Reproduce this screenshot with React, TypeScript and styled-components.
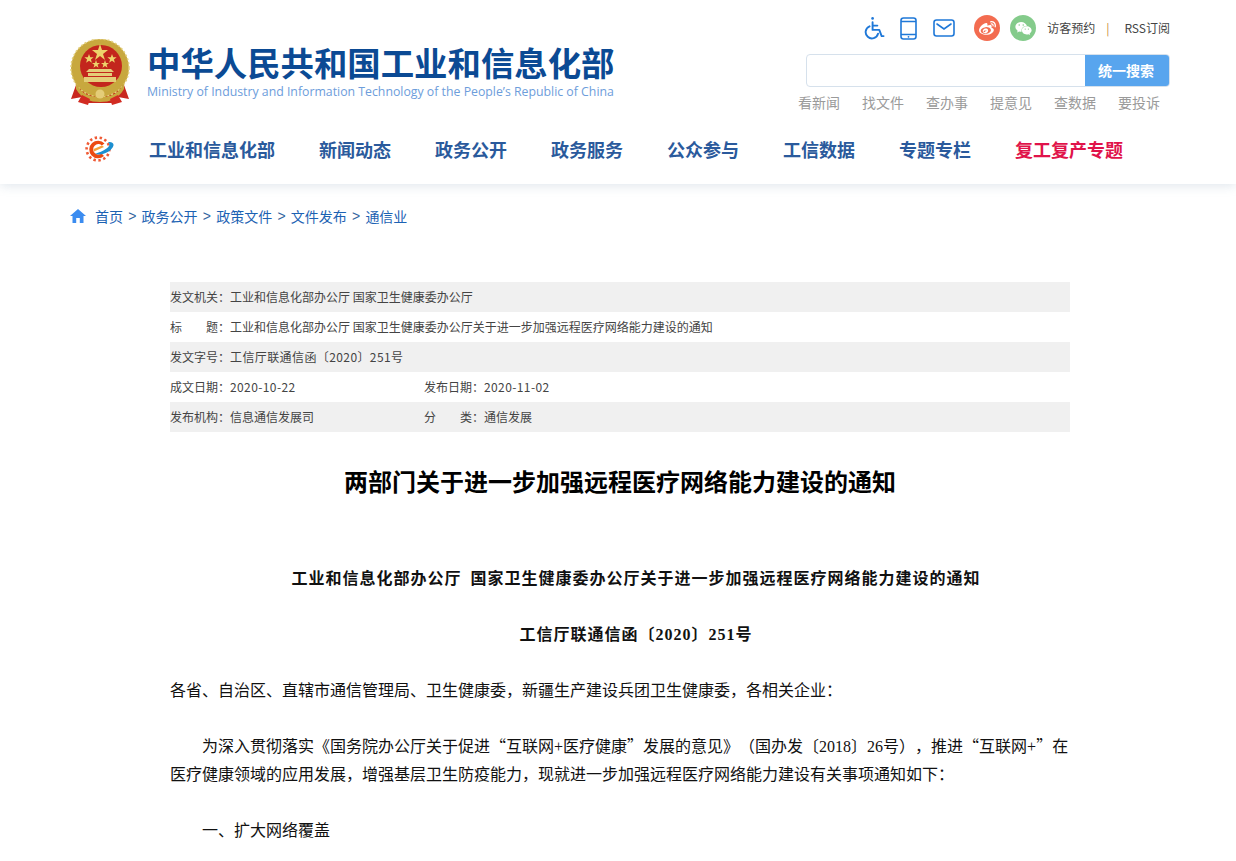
import React from 'react'
import styled, { createGlobalStyle } from 'styled-components'
import { FaWeibo, FaWeixin } from 'react-icons/fa'

const GlobalStyle = createGlobalStyle`
  html, body {
    margin: 0;
    padding: 0;
    height: 861px;
    overflow: hidden;
    background: #fff;
    font-family: "Noto Sans CJK SC", "Liberation Sans", sans-serif;
    text-spacing-trim: space-all;
  }
  p, h1 { margin: 0; }
`

const Header = styled.header`
  height: 184px;
  background: #fff;
  box-shadow: 0 2px 10px rgba(120, 145, 175, 0.22);
`
const Wrap = styled.div`
  width: 1100px;
  margin-left: 70px;
`
const TopRow = styled.div`
  height: 120px;
  display: flex;
  justify-content: space-between;
`
const Brand = styled.div`
  display: flex;
  align-items: flex-start;
  gap: 17px;
  padding-top: 39px;
`
const BrandText = styled.div`
  display: flex;
  flex-direction: column;
  padding-top: 4px;
`
const BrandName = styled.div`
  font-size: 33.4px;
  line-height: 38px;
  font-weight: 700;
  color: #0b4a94;
  white-space: nowrap;
`
const BrandEnglish = styled.div`
  font-family: "Open Sans", "Liberation Sans", sans-serif;
  font-size: 12.3px;
  line-height: 18px;
  margin-top: 2px;
  color: #6d9ddb;
  white-space: nowrap;
`
const Tools = styled.div`
  width: 372px;
  padding-top: 14px;
  display: flex;
  flex-direction: column;
  align-items: flex-end;
`
const ToolRow = styled.div`
  height: 28px;
  display: flex;
  align-items: center;
  font-size: 12px;
  color: #444;
`
const ToolText = styled.span`
  padding-bottom: 2px;
`
const IconLink = styled.a<{ $gap: number }>`
  display: flex;
  align-items: center;
  margin-right: ${(p) => p.$gap}px;
  color: #1f78d8;
`
const Social = styled.a<{ $bg: string; $gap: number }>`
  width: 26px;
  height: 26px;
  border-radius: 50%;
  background: ${(p) => p.$bg};
  color: #fff;
  display: flex;
  align-items: center;
  justify-content: center;
  margin-right: ${(p) => p.$gap}px;
  font-size: 17px;
`
const Divider = styled.span`
  color: #c98a3a;
  padding-bottom: 2px;
  margin: 0 15px 0 11px;
`
const Search = styled.div`
  box-sizing: border-box;
  width: 364px;
  height: 33px;
  margin-top: 12px;
  display: flex;
  background: #fff;
  border: 1px solid #d6e1ec;
  border-radius: 4px;
  overflow: hidden;
`
const SearchInput = styled.input`
  flex: 1;
  min-width: 0;
  border: 0;
  outline: 0;
  background: transparent;
`
const SearchButton = styled.button`
  width: 84px;
  border: 0;
  padding: 0 2px 2px 0;
  background: #58a5ee;
  color: #fff;
  font-family: inherit;
  font-size: 14px;
  font-weight: 700;
`
const Quick = styled.div`
  display: flex;
  gap: 22px;
  margin-top: 5px;
  margin-right: 10px;
  font-size: 14px;
  line-height: 20px;
  color: #9a9a9a;
`
const Nav = styled.nav`
  height: 58px;
  display: flex;
  align-items: center;
  padding-left: 15px;
`
const NavMark = styled.div`
  display: flex;
  margin-right: 35px;
`
const NavItem = styled.a<{ $hot?: boolean }>`
  font-size: 18px;
  font-weight: 700;
  white-space: nowrap;
  margin-right: 44px;
  color: ${(p) => (p.$hot ? '#e0134a' : '#2a5a9c')};
`
const Crumbs = styled.div`
  display: flex;
  align-items: center;
  height: 20px;
  padding-top: 22px;
  font-size: 14px;
  color: #1c62b3;
`
const HomeIcon = styled.svg`
  margin-right: 9px;
`
const Sep = styled.span`
  width: 18.6px;
  text-align: center;
  font-family: "Liberation Sans", sans-serif;
  color: #33669f;
`
const Main = styled.main`
  width: 900px;
  margin: 56px 0 0 170px;
`
const MetaRow = styled.div<{ $shade?: boolean }>`
  box-sizing: border-box;
  height: 30px;
  padding-bottom: 2px;
  display: flex;
  align-items: center;
  font-size: 12px;
  color: #444;
  background: ${(p) => (p.$shade ? '#f0f0f0' : '#fff')};
`
const MetaCell = styled.div`
  display: flex;
  width: 254px;
`
const MetaLabel = styled.span<{ $spread?: boolean }>`
  width: 60px;
  flex: none;
  display: flex;
  justify-content: ${(p) => (p.$spread ? 'space-between' : 'flex-start')};
  white-space: pre;
`
const Num = styled.span`
  letter-spacing: 0.4px;
`
const Title = styled.h1`
  margin-top: 31px;
  font-size: 24px;
  line-height: 36px;
  font-weight: 700;
  color: #000;
  text-align: center;
`
const Article = styled.article`
  margin-top: 66px;
  display: flex;
  flex-direction: column;
  gap: 28px;
  font-family: "Liberation Serif", "Noto Sans CJK SC", serif;
  font-size: 16px;
  line-height: 28px;
  color: #111;
`
const Heading = styled.p`
  text-align: center;
  text-indent: 32px;
  font-weight: 700;
  letter-spacing: 1px;
  word-spacing: 4px;
`
const Para = styled.p<{ $indent?: boolean }>`
  text-indent: ${(p) => (p.$indent ? '32px' : '0')};
`
const Wide = styled.span`
  font-family: "Noto Sans CJK SC", sans-serif;
  line-height: 0;
`

const Emblem = () => (
  <svg width="60" height="66" viewBox="0 0 60 66">
    <path d="M6 46 L1 60 L12 58 L16 64 L44 64 L48 58 L59 60 L54 46 Z" fill="#c9281f" />
    <circle cx="30" cy="29" r="29" fill="#c8a83e" />
    <circle cx="30" cy="29" r="29" fill="none" stroke="#e3cf7c" strokeWidth="1.5" strokeDasharray="2 2" />
    <circle cx="31" cy="27" r="21" fill="#c3261d" />
    <polygon points="26,4 28,10 34,10 29,14 31,20 26,16 21,20 23,14 18,10 24,10" fill="#edd36a" transform="translate(4 1)" />
    <polygon points="16,16 17.2,19.3 20.6,19.3 17.9,21.4 18.9,24.8 16,22.8 13.1,24.8 14.1,21.4 11.4,19.3 14.8,19.3" fill="#edd36a" transform="translate(3 -1)" />
    <polygon points="44,16 45.2,19.3 48.6,19.3 45.9,21.4 46.9,24.8 44,22.8 41.1,24.8 42.1,21.4 39.4,19.3 42.8,19.3" fill="#edd36a" transform="translate(-2 -1)" />
    <polygon points="25,22 26,25 29,25 26.6,26.8 27.5,29.8 25,28 22.5,29.8 23.4,26.8 21,25 24,25" fill="#edd36a" transform="translate(1 -1)" />
    <polygon points="36,22 37,25 40,25 37.6,26.8 38.5,29.8 36,28 33.5,29.8 34.4,26.8 32,25 35,25" fill="#edd36a" transform="translate(-1 -1)" />
    <path d="M19 30 H41 L44 33 H16 Z M18 34 H42 V37 H18 Z M14 38 H46 V43 H14 Z" fill="#e4cd78" />
    <path d="M6 44 C12 56 20 58 30 58 C40 58 48 56 54 44 L54 50 C48 60 40 63 30 63 C20 63 12 60 6 50 Z" fill="#c8a83e" />
    <circle cx="30" cy="55" r="4.5" fill="#e4cd78" />
    <path d="M12 56 L20 60 L18 66 L8 63 Z M48 56 L40 60 L42 66 L52 63 Z" fill="#d22c22" />
  </svg>
)

const Wheelchair = () => (
  <svg width="21" height="24" viewBox="0 0 22 24" fill="none" stroke="currentColor" strokeWidth="2" strokeLinecap="round" strokeLinejoin="round">
    <circle cx="9" cy="2" r="1.4" fill="currentColor" stroke="none" />
    <path d="M9 6 V14 H16 L18.5 20.5 H20.5" />
    <path d="M9.5 9.5 H14" />
    <path d="M5.8 10.2 A6.6 6.6 0 1 0 14.7 18" />
  </svg>
)

const Phone = () => (
  <svg width="17" height="23" viewBox="0 0 17 23" fill="none" stroke="currentColor" strokeWidth="1.6">
    <rect x="1" y="1" width="15" height="21" rx="2.5" />
    <path d="M1 4.5 H16 M1 17.5 H16" />
    <circle cx="8.5" cy="19.8" r="0.9" fill="currentColor" stroke="none" />
  </svg>
)

const Mail = () => (
  <svg width="22" height="18" viewBox="0 0 22 18" fill="none" stroke="currentColor" strokeWidth="1.6" strokeLinecap="round">
    <rect x="1" y="1" width="20" height="16" rx="2.5" />
    <path d="M4 5 L11 10 L18 5" />
  </svg>
)

const GearMark = () => (
  <svg width="29" height="26" viewBox="0 0 29 26">
    <circle cx="13" cy="13" r="11.4" fill="none" stroke="#ef5a35" strokeWidth="2.6" strokeDasharray="2.4 2.6" />
    <path d="M19.5 7.5 A8.8 8.8 0 1 0 19 20 L16.6 17.4 A5.2 5.2 0 1 1 16.8 9.4 Z" fill="#ec4a12" />
    <path d="M8.5 13 L17 9.4 L19 11 L9 15.5 Z" fill="#f6a13a" />
    <path d="M10 18 C18 20 27 15 28.5 9.5 C29 7 26.5 5.5 23 6 C25.5 8 24.5 10.5 21.5 12.5 C18 15 14 16.5 10 18 Z" fill="#1c8fd0" />
  </svg>
)

const quickLinks = ['看新闻', '找文件', '查办事', '提意见', '查数据', '要投诉']
const navItems = ['工业和信息化部', '新闻动态', '政务公开', '政务服务', '公众参与', '工信数据', '专题专栏']
const crumbs = ['政务公开', '政策文件', '文件发布', '通信业']

export default function App() {
  return (
    <>
      <GlobalStyle />
      <Header>
        <Wrap>
          <TopRow>
            <Brand>
              <Emblem />
              <BrandText>
                <BrandName>中华人民共和国工业和信息化部</BrandName>
                <BrandEnglish>Ministry of Industry and Information Technology of the People’s Republic of China</BrandEnglish>
              </BrandText>
            </Brand>
            <Tools>
              <ToolRow>
                <IconLink $gap={15}><Wheelchair /></IconLink>
                <IconLink $gap={16}><Phone /></IconLink>
                <IconLink $gap={19}><Mail /></IconLink>
                <Social $bg="#f36c50" $gap={10}><FaWeibo /></Social>
                <Social $bg="#84cb8b" $gap={11}><FaWeixin /></Social>
                <ToolText>访客预约</ToolText>
                <Divider>|</Divider>
                <ToolText>RSS订阅</ToolText>
              </ToolRow>
              <Search>
                <SearchInput />
                <SearchButton>统一搜索</SearchButton>
              </Search>
              <Quick>
                {quickLinks.map((t) => (
                  <span key={t}>{t}</span>
                ))}
              </Quick>
            </Tools>
          </TopRow>
          <Nav>
            <NavMark><GearMark /></NavMark>
            {navItems.map((t) => (
              <NavItem key={t}>{t}</NavItem>
            ))}
            <NavItem $hot>复工复产专题</NavItem>
          </Nav>
        </Wrap>
      </Header>
      <Wrap>
        <Crumbs>
          <HomeIcon width="16" height="14" viewBox="0 0 16 14">
            <path d="M8 0 L16 7 H13.5 V14 H9.8 V9 H6.2 V14 H2.5 V7 H0 Z" fill="#3b8cf0" />
          </HomeIcon>
          <span>首页</span>
          {crumbs.map((t) => (
            <React.Fragment key={t}>
              <Sep>&gt;</Sep>
              <span>{t}</span>
            </React.Fragment>
          ))}
        </Crumbs>
      </Wrap>
      <Main>
        <MetaRow $shade>
          <MetaLabel>发文机关：</MetaLabel>
          <span>工业和信息化部办公厅 国家卫生健康委办公厅</span>
        </MetaRow>
        <MetaRow>
          <MetaLabel $spread><span>标</span><span>题：</span></MetaLabel>
          <span>工业和信息化部办公厅 国家卫生健康委办公厅关于进一步加强远程医疗网络能力建设的通知</span>
        </MetaRow>
        <MetaRow $shade>
          <MetaLabel>发文字号：</MetaLabel>
          <Num>工信厅联通信函〔2020〕251号</Num>
        </MetaRow>
        <MetaRow>
          <MetaCell>
            <MetaLabel>成文日期：</MetaLabel>
            <Num>2020-10-22</Num>
          </MetaCell>
          <MetaCell>
            <MetaLabel>发布日期：</MetaLabel>
            <Num>2020-11-02</Num>
          </MetaCell>
        </MetaRow>
        <MetaRow $shade>
          <MetaCell>
            <MetaLabel>发布机构：</MetaLabel>
            <span>信息通信发展司</span>
          </MetaCell>
          <MetaCell>
            <MetaLabel $spread><span>分</span><span>类：</span></MetaLabel>
            <span>通信发展</span>
          </MetaCell>
        </MetaRow>
        <Title>两部门关于进一步加强远程医疗网络能力建设的通知</Title>
        <Article>
          <Heading>工业和信息化部办公厅 国家卫生健康委办公厅关于进一步加强远程医疗网络能力建设的通知</Heading>
          <Heading>工信厅联通信函〔2020〕251号</Heading>
          <Para>各省、自治区、直辖市通信管理局、卫生健康委，新疆生产建设兵团卫生健康委，各相关企业：</Para>
          <Para $indent>
            为深入贯彻落实《国务院办公厅关于促进<Wide>“</Wide>互联网+医疗健康<Wide>”</Wide>发展的意见》（国办发〔2018〕26号），推进<Wide>“</Wide>互联网+<Wide>”</Wide>在<br />医疗健康领域的应用发展，增强基层卫生防疫能力，现就进一步加强远程医疗网络能力建设有关事项通知如下：
          </Para>
          <Para $indent>一、扩大网络覆盖</Para>
        </Article>
      </Main>
    </>
  )
}
